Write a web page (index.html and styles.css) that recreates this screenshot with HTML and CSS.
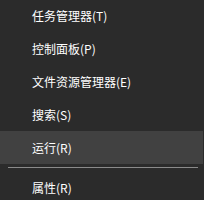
FILE: index.html
```html
<!DOCTYPE html>
<html lang="zh-CN">
<head>
  <meta charset="UTF-8">
  <title>菜单</title>
  <link rel="stylesheet" href="styles.css">
</head>
<body>
  <ul class="menu">
    <li class="item">任务管理器(T)</li>
    <li class="item">控制面板(P)</li>
    <li class="item">文件资源管理器(E)</li>
    <li class="item">搜索(S)</li>
    <li class="item active">运行(R)</li>
    <li class="separator"></li>
    <li class="item">属性(R)</li>
  </ul>
</body>
</html>
```

FILE: styles.css
```css
body {
  margin: 0;
  background: #2b2b2b;
  font-family: "Noto Sans CJK SC", "Liberation Sans", sans-serif;
  overflow: hidden;
}

.menu {
  list-style: none;
  margin: -1px 1px 0 0;
  padding: 0;
}

.item {
  height: 33px;
  line-height: 33px;
  padding-left: 32px;
  font-size: 12px;
  color: #fff;
  white-space: nowrap;
}

.item.active {
  background: #414141;
}

.separator {
  height: 1px;
  margin: 3px 5px 3px 8px;
  background: #8a8a8a;
}
```
